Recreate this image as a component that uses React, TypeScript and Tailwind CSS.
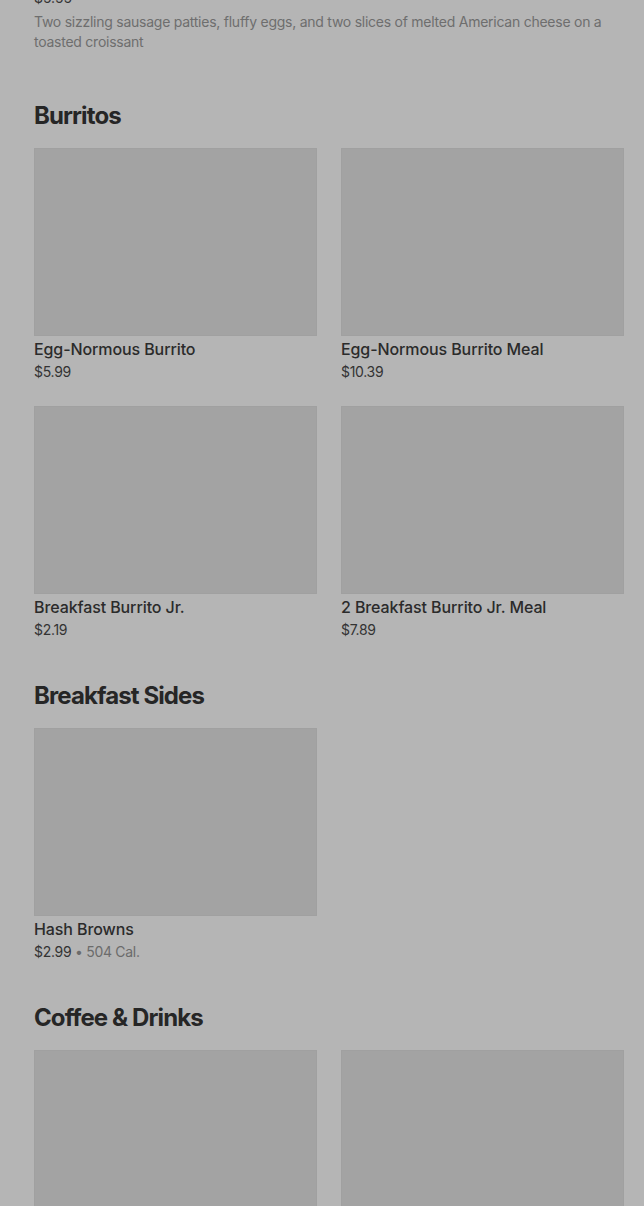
const sections = [
  {
    title: 'Burritos',
    items: [
      { name: 'Egg-Normous Burrito', price: '$5.99' },
      { name: 'Egg-Normous Burrito Meal', price: '$10.39' },
      { name: 'Breakfast Burrito Jr.', price: '$2.19' },
      { name: '2 Breakfast Burrito Jr. Meal', price: '$7.89' },
    ],
  },
  {
    title: 'Breakfast Sides',
    items: [{ name: 'Hash Browns', price: '$2.99', cal: '504 Cal.' }],
  },
  {
    title: 'Coffee & Drinks',
    items: [
      { name: '', price: '' },
      { name: '', price: '' },
    ],
  },
];

const ItemCard = ({ item }: { item: any }) => (
  <div className="flex flex-col">
    <div className="h-[188px] w-full bg-[#a3a3a3] border border-[#a0a0a0]" />
    {item.name && (
      <>
        <div className="mt-px text-[16px] leading-[24px] font-medium tracking-[-0.1px] text-[#2b2b2b]">{item.name}</div>
        <div className="mt-px text-[14px] leading-[20px] tracking-[-0.3px] text-[#333333]">
          {item.price}
          {item.cal && <span className="text-[#6b6b6b]"> • {item.cal}</span>}
        </div>
      </>
    )}
  </div>
);

export default function App() {
  return (
    <div
      className="flex flex-col min-h-[1206px] bg-[#b5b5b5] pl-[34px] pr-[20px] overflow-hidden"
      style={{ fontFamily: 'Inter, "Noto Sans", sans-serif' }}
    >
      <div className="flex flex-col -mt-[12px]">
        <div className="text-[14px] leading-[20px] text-[#333333]">$5.55</div>
        <p className="mt-[4px] text-[14px] leading-[20px] tracking-[-0.25px] text-[#6e6e6e]">
          Two sizzling sausage patties, fluffy eggs, and two slices of melted American cheese on a toasted croissant
        </p>
      </div>
      <div className="flex flex-col gap-[39px] mt-[47px]">
        {sections.map((s, i) => (
          <section key={i} className="flex flex-col gap-[16px]">
            <h2 className="pt-px text-[24px] leading-[32px] font-bold tracking-[-0.9px] text-[#262626]">{s.title}</h2>
            <div className="grid grid-cols-2 gap-[24px]">
              {s.items.map((it, j) => (
                <ItemCard key={j} item={it} />
              ))}
            </div>
          </section>
        ))}
      </div>
    </div>
  );
}
